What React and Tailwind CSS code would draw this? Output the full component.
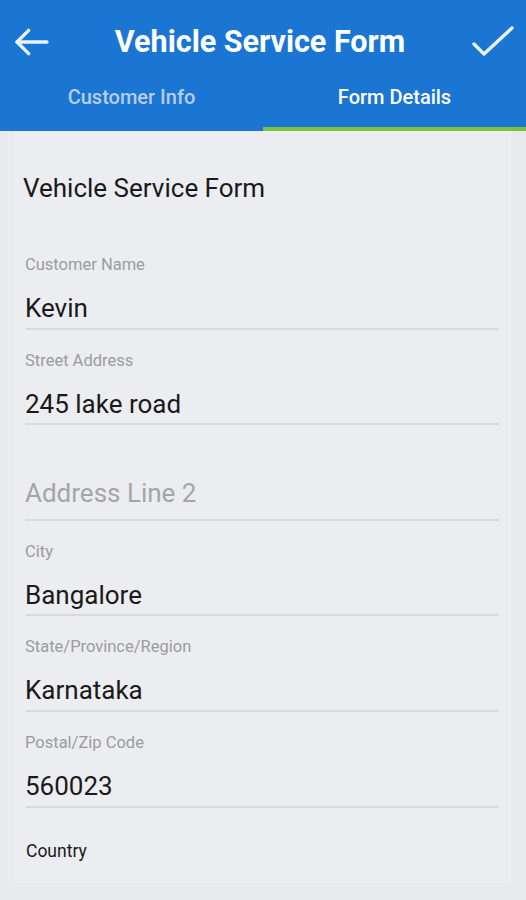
import React from 'react';

const fields = [
    { label: 'Customer Name', value: 'Kevin' },
    { label: 'Street Address', value: '245 lake road' },
    { label: '', value: '', placeholder: 'Address Line 2' },
    { label: 'City', value: 'Bangalore' },
    { label: 'State/Province/Region', value: 'Karnataka' },
    { label: 'Postal/Zip Code', value: '560023' },
];

export default function App() {
    return (
        <div className="w-[526px] h-[900px] bg-[#e9eaee] font-['Roboto',sans-serif] overflow-hidden">
            {/* Header */}
            <div className="bg-[#1a76d2]">
                <div className="h-[84px] flex items-center justify-between px-[12px]">
                    <svg width="40" height="40" viewBox="0 0 24 24" fill="none" stroke="white" strokeWidth="2" strokeLinecap="round" strokeLinejoin="round" className="opacity-90">
                        <path d="M21 12H3" />
                        <path d="M10 5l-7 7 7 7" />
                    </svg>
                    <h1 className="text-white text-[30.5px] font-bold">Vehicle Service Form</h1>
                    <svg width="48" height="48" viewBox="0 0 24 24" fill="none" stroke="white" strokeWidth="1.7" strokeLinecap="round" strokeLinejoin="round" className="opacity-90 -mr-[2px]">
                        <path d="M3 13l5 5L22 5" />
                    </svg>
                </div>
                <div className="flex h-[47px]">
                    <div className="flex-1 flex items-start justify-center border-b-[4px] border-[#1a76d2]">
                        <span className="text-[20px] font-medium text-[#b8cde6] -mt-[2px]">Customer Info</span>
                    </div>
                    <div className="flex-1 flex items-start justify-center border-b-[4px] border-[#7cc23f]">
                        <span className="text-[20px] font-medium text-white -mt-[2px]">Form Details</span>
                    </div>
                </div>
            </div>

            {/* Body */}
            <div className="mx-[15px] bg-[#ecedf0] h-[752px] pt-[40px]">
                <h2 className="text-[26px] text-[#1a1a1a] pl-[8px] leading-[34px]">Vehicle Service Form</h2>
                <div className="mt-[29px] pl-[10px] pr-[12px]">
                    {fields.map((f, i) => (
                        <div key={i} className="h-[95.6px] flex flex-col border-b-[2px] border-[#d9dadf]">
                            <div className="h-[58px] pt-[20px] text-[16.5px] text-[#9a9ca1] leading-[22px]">{f.label}</div>
                            <div className={`text-[26px] leading-[32px] ${f.placeholder ? 'text-[#a3a5aa] -mt-[6px]' : 'text-[#1a1a1a]'}`}>
                                {f.placeholder || f.value}
                            </div>
                        </div>
                    ))}
                    <div className="pt-[32px] pl-[1px] text-[17.5px] leading-[22px] text-[#1a1a1a]">Country</div>
                </div>
            </div>
        </div>
    );
}
